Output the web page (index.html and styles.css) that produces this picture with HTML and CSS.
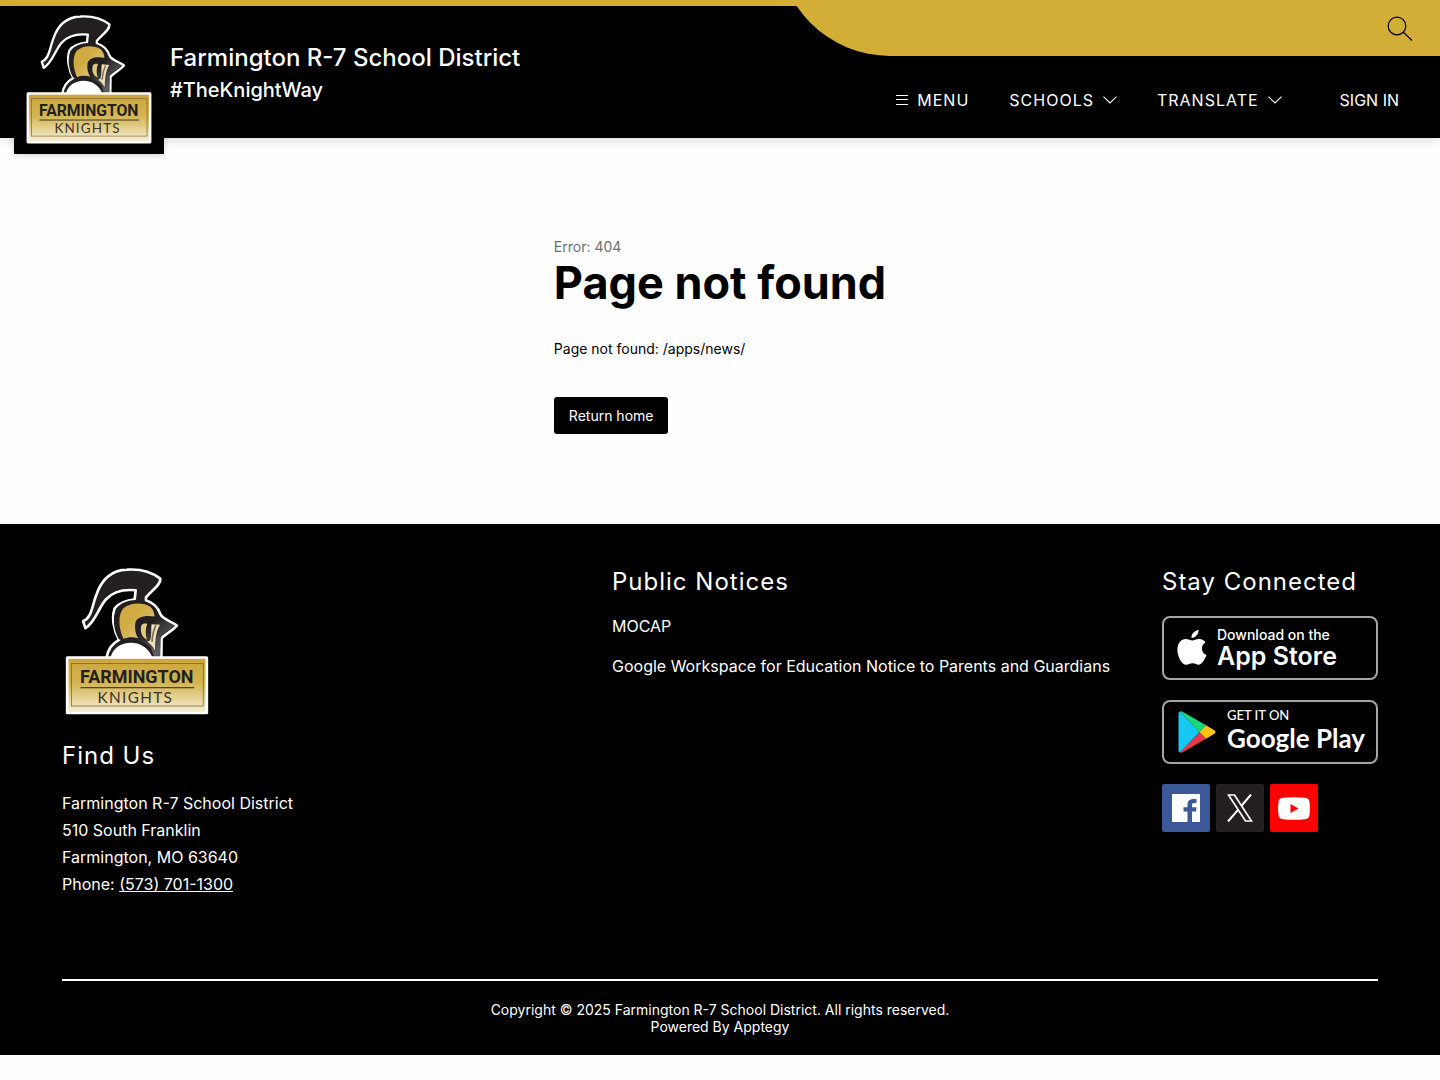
FILE: index.html
```html
<!DOCTYPE html>
<html lang="en">
<head>
    <meta charset="UTF-8">
    <meta name="viewport" content="width=device-width, initial-scale=1.0">
    <title>Farmington R-7 School District</title>

    <link rel="stylesheet" href="styles.css">
</head>
<body>
    <!-- Logo, used in header and footer -->
    <svg class="sprite" width="0" height="0" aria-hidden="true">
        <defs>
            <linearGradient id="sign" x1="0" y1="0" x2="0" y2="1">
                <stop offset="0" stop-color="#cba63c"/>
                <stop offset="0.45" stop-color="#d3b450"/>
                <stop offset="1" stop-color="#f6eed6"/>
            </linearGradient>
            <linearGradient id="gold" x1="0" y1="0" x2="1" y2="1">
                <stop offset="0.4" stop-color="#d0ab43"/>
                <stop offset="1" stop-color="#e6d193"/>
            </linearGradient>
            <linearGradient id="steel" x1="0" y1="0" x2="1" y2="1">
                <stop offset="0.5" stop-color="#231f20"/>
                <stop offset="0.8" stop-color="#5d5e61"/>
                <stop offset="1" stop-color="#333"/>
            </linearGradient>
        </defs>
        <symbol id="logo" viewBox="45 25 432 442">
            <path fill="#231f20" stroke="#fff" stroke-width="8" stroke-linejoin="round" d="M99 185C125 174 126 139 138 108C152 65 178 32 231 30C274 27 309 40 331 57C333 75 310 88 288 113L288 123C310 129 324 143 331 164C340 181 362 184 381 198C365 216 349 221 335 236L334 298L169 298C172 271 184 253 207 241C191 213 184 174 194 146C204 132 225 123 254 119L257 92C218 88 187 98 168 119C145 144 136 188 106 206Z"/>
            <path fill="url(#steel)" d="M207 240C190 211 187 174 198 149C218 118 273 113 302 133C323 146 325 164 333 176C345 187 359 189 375 198C357 212 343 218 332 232L331 298L311 288L302 264C270 238 239 235 207 240Z"/>
            <path fill="url(#gold)" d="M220 238C206 206 203 169 219 147C241 128 279 128 300 141C310 150 313 161 314 171C284 166 260 172 256 190C253 207 257 224 265 236C250 232 234 232 220 238Z"/>
            <path fill="#e0c77f" d="M274 198C278 192 284 191 292 193C286 208 286 224 291 240L284 236C274 228 270 212 274 198Z"/>
            <path fill="#f0e2b8" d="M305 194L330 196C320 212 315 238 315 272C309 262 302 253 292 247L300 243C306 228 302 210 305 194Z"/>
            <path fill="none" stroke="#77705f" stroke-width="5" d="M318 197C310 214 307 230 306 247"/>
            <path fill="#fff" d="M181 298C186 266 213 250 243 250C273 250 298 268 309 298Z"/>
            <rect x="47" y="290" width="428" height="175" rx="5" fill="#fff"/>
            <rect x="55" y="298" width="412" height="160" fill="url(#sign)"/>
            <rect x="64" y="312" width="396" height="128" fill="none" stroke="#6b5a2b" stroke-width="2"/>
            <path stroke="#231f20" stroke-width="3" d="M91 385H433"/>
            <text class="logo-name" x="260" y="372" text-anchor="middle">FARMINGTON</text>
            <text class="logo-team" x="256" y="431" text-anchor="middle">KNIGHTS</text>
        </symbol>
    </svg>

    <header class="header">
        <div class="swoosh"></div>
        <button class="search" type="button" aria-label="Search">
            <svg width="26" height="26" viewBox="0 0 26 26" fill="none" stroke="#000" stroke-width="1.2"><circle cx="10" cy="10" r="8.8"/><path d="M16.3 16.3L25 24.5"/></svg>
        </button>
        <a class="header-logo" href="#" aria-label="Home">
            <svg width="126" height="129"><use href="#logo"/></svg>
        </a>
        <div class="titles">
            <div class="district">Farmington R-7 School District</div>
            <div class="tagline">#TheKnightWay</div>
        </div>
        <nav class="nav">
            <button class="nav-btn" type="button">
                <svg width="12" height="10" viewBox="0 0 12 10" stroke="#fff" stroke-width="1"><path d="M0 .5H12M0 4.5H12M0 9.5H12"/></svg>
                <span>MENU</span>
            </button>
            <button class="nav-btn" type="button">
                <span>SCHOOLS</span>
                <svg width="14" height="8" viewBox="0 0 14 8" fill="none" stroke="#fff" stroke-width="1.1"><path d="M.5 .7L7 7L13.500 .7"/></svg>
            </button>
            <button class="nav-btn" type="button">
                <span>TRANSLATE</span>
                <svg width="14" height="8" viewBox="0 0 14 8" fill="none" stroke="#fff" stroke-width="1.1"><path d="M.5 .7L7 7L13.500 .7"/></svg>
            </button>
            <a class="sign-in" href="#">SIGN IN</a>
        </nav>
    </header>

    <main class="main">
        <div class="error">
            <div class="error-code">Error: 404</div>
            <h1>Page not found</h1>
            <p>Page not found: /apps/news/</p>
            <a class="home-btn" href="#">Return home</a>
        </div>
    </main>

    <footer class="footer">
        <div class="columns">
            <div class="find-us">
                <svg class="footer-logo" width="144" height="147" role="img" aria-label="Farmington Knights"><use href="#logo"/></svg>
                <h2>Find Us</h2>
                <address>
                    Farmington R-7 School District<br>
                    510 South Franklin<br>
                    Farmington, MO 63640<br>
                    Phone: <a href="tel:5737011300">(573) 701-1300</a>
                </address>
            </div>
            <div class="notices">
                <h2>Public Notices</h2>
                <a href="#">MOCAP</a>
                <a href="#">Google Workspace for Education Notice to Parents and Guardians</a>
            </div>
            <div class="connected">
                <h2>Stay Connected</h2>
                <a class="store apple" href="#">
                    <svg width="30" height="36" viewBox="0 0 30 36" fill="#fff"><path d="M21.500 0C22 3.800 18.500 8 14.500 7.900C14.200 4 17.500 .6 21.500 0ZM15.300 10.400C17 10.400 19 8.700 22.300 8.900C25 9 27.200 10.200 28.600 12.200C23.200 15.500 24.100 22.900 29.500 25.100C28.200 28.600 25.200 34.600 22 34.700C19.600 34.800 18.700 33.200 15.600 33.200C12.600 33.200 11.600 34.700 9.200 34.800C5 35 .5 26.800 .4 20.200C.2 13.200 4.200 9.100 8.600 9C11.500 9 13.800 10.400 15.300 10.400Z"/></svg>
                    <span class="store-text"><small>Download on the</small><b>App Store</b></span>
                </a>
                <a class="store google" href="#">
                    <svg width="38" height="42" viewBox="0 0 38 42">
                        <path fill="#16c9f5" d="M2 .5C.8 1 .5 2 .5 3V39C.5 40 .9 41 2 41.500L21.500 21Z"/>
                        <path fill="#1bd97b" d="M2 .5C3 .1 4 .4 5 1L28 14.200L21.500 21Z"/>
                        <path fill="#e73b4d" d="M2 41.500C3 41.900 4 41.600 5 41L28 27.800L21.500 21Z"/>
                        <path fill="#fbc313" d="M28 14.200L36 19C38 20.400 38 21.600 36 23L28 27.800L21.500 21Z"/>
                    </svg>
                    <span class="store-text"><small>GET IT ON</small><b>Google Play</b></span>
                </a>
                <div class="social">
                    <a class="facebook" href="#" aria-label="Facebook">
                        <svg width="28" height="28" viewBox="0 0 28 28"><path fill="#fff" d="M0 0H28V28H20V17.500H24L24.500 13.200H20V11C20 9.700 20.600 9 22 9H24.500V5.200C19 4.500 15.500 6.200 15.500 10.500V13.200H11.500V17.500H15.500V28H0Z"/></svg>
                    </a>
                    <a class="x" href="#" aria-label="X">
                        <svg width="26" height="28" viewBox="0 0 26 28" fill="none" stroke="#fff"><path stroke-width="1.700" d="M1.500 1H7.500L24.500 27H18.500Z"/><path stroke-width="2" d="M24 .5L14.300 12M11.500 15.300L1 27.500"/></svg>
                    </a>
                    <a class="youtube" href="#" aria-label="YouTube">
                        <svg width="32" height="23" viewBox="0 0 32 23"><path fill="#fff" d="M5 .8C12 0 20 0 27 .8C30 1.100 31.200 2.500 31.500 5C32 9.500 32 13.500 31.500 18C31.200 20.500 30 21.900 27 22.200C20 23 12 23 5 22.200C2 21.900 .8 20.500 .5 18C0 13.500 0 9.500 .5 5C.8 2.500 2 1.100 5 .8Z"/><path fill="#f00" d="M12.500 7V16L20.500 11.500Z"/></svg>
                    </a>
                </div>
            </div>
        </div>
        <div class="copyright">
            Copyright © 2025 Farmington R-7 School District. All rights reserved.<br>
            Powered By Apptegy
        </div>
    </footer>
</body>
</html>
```

FILE: styles.css
```css
* {
    box-sizing: border-box;
}

body {
    margin: 0;
    background: #fefefe;
    color: #000;
    font-family: Inter, "Liberation Sans", sans-serif;
    font-size: 16px;
}

a {
    color: inherit;
    text-decoration: none;
}

svg {
    display: block;
    flex-shrink: 0;
}

.sprite {
    position: absolute;
}

.logo-name {
    font: bold 54px Roboto, sans-serif;
    fill: #231f20;
}

.logo-team {
    font: 46px Lato, sans-serif;
    letter-spacing: 4px;
    fill: #3b3424;
}

/* Header */
.header {
    position: relative;
    display: flex;
    align-items: flex-start;
    height: 138px;
    padding: 0 41px 0 14px;
    border-top: 6px solid #d3ae36;
    background: #000;
    color: #fff;
    box-shadow: 0 2px 10px rgba(0, 0, 0, 0.15);
}

/* gold band with the round corner, clipped by the top of the window */
.swoosh {
    position: absolute;
    top: -62px;
    left: 54%;
    right: 0;
    height: 112px;
    border-bottom-left-radius: 112px;
    background: #d3ae36;
}

.search {
    position: absolute;
    top: 10px;
    right: 27px;
    padding: 0;
    border: none;
    background: none;
}

.header-logo {
    width: 150px;
    height: 148px;
    padding: 9px 12px;
    background: #000;
    box-shadow: 0 2px 6px rgba(0, 0, 0, 0.15);
}

.titles {
    padding: 36px 0 0 6px;
    font-weight: 500;
}

.district {
    font-size: 24px;
    line-height: 32px;
}

.tagline {
    font-size: 20px;
    line-height: 32px;
}

.nav {
    position: relative;
    display: flex;
    align-items: center;
    gap: 40px;
    margin-left: auto;
    padding-top: 84px;
}

.nav-btn {
    display: flex;
    align-items: center;
    gap: 9px;
    padding: 0;
    border: none;
    background: none;
    color: #fff;
    font: inherit;
    line-height: 20px;
    letter-spacing: 1px;
}

.sign-in {
    padding-left: 18px;
    line-height: 20px;
}

/* 404 */
.main {
    display: flex;
    justify-content: center;
    padding: 100px 20px 90px;
    font-size: 14px;
}

.error-code {
    color: #6f6f6f;
    line-height: 18px;
}

h1 {
    margin: 0;
    font-size: 45px;
    line-height: 54px;
}

.error p {
    margin: 28px 0 38px;
    line-height: 21px;
}

.home-btn {
    display: inline-block;
    padding: 10px 15px;
    border-radius: 3px;
    background: #000;
    color: #fff;
    line-height: 17px;
}

/* Footer */
.footer {
    padding: 42px 62px 20px;
    background: #000;
    color: #fff;
}

.columns {
    display: grid;
    grid-template-columns: 1fr 1fr 216px;
    padding-bottom: 81px;
    border-bottom: 2px solid #fff;
}

h2 {
    margin: 0;
    font-size: 24px;
    font-weight: 400;
    line-height: 32px;
    letter-spacing: 1px;
}

.footer-logo {
    margin: 2px 3px 25px;
}

address {
    margin-top: 18px;
    font-style: normal;
    line-height: 27px;
}

address a {
    text-decoration: underline;
}

.notices a {
    display: block;
    margin-top: 20px;
    line-height: 20px;
}

.notices h2,
.connected h2 {
    margin-bottom: -2px;
}

.store {
    display: flex;
    align-items: center;
    height: 64px;
    margin-top: 20px;
    border: 2px solid #a6a6a6;
    border-radius: 8px;
}

.apple {
    gap: 10px;
    padding-left: 13px;
}

.google {
    gap: 11px;
    padding-left: 14px;
}

.store-text small,
.store-text b {
    display: block;
    font-weight: 500;
}

.store-text small {
    font-size: 13px;
    line-height: 16px;
}

.store-text b {
    font-size: 25px;
    line-height: 26px;
}

.apple .store-text b {
    font-weight: 600;
}

.apple .store-text small {
    font-size: 14px;
}

.google .store-text {
    padding-bottom: 4px;
    font-family: Lato, sans-serif;
}

.google .store-text b {
    font-size: 26px;
    font-weight: 700;
    line-height: 30px;
}

.social {
    display: flex;
    gap: 6px;
    margin-top: 20px;
}

.social a {
    display: flex;
    align-items: center;
    justify-content: center;
    width: 48px;
    height: 48px;
    border-radius: 2px;
}

.facebook {
    background: #3b5998;
}

.x {
    background: #231f20;
}

.youtube {
    background: #f00;
}

.copyright {
    padding-top: 20px;
    font-size: 14px;
    line-height: 17px;
    text-align: center;
}
```
